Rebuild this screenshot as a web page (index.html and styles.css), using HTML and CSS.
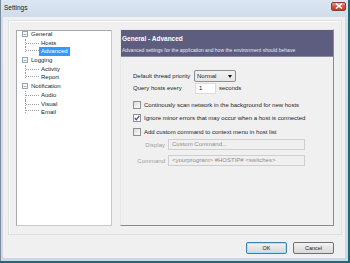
FILE: index.html
```html
<!DOCTYPE html>
<html>
<head>
<meta charset="utf-8">
<link rel="stylesheet" href="styles.css">
</head>
<body>
<div class="screen">
  <div class="window">
    <div class="titlebar">
      <span class="title">Settings</span>
      <span class="close"><svg width="8" height="6" viewBox="0 0 8 6"><path d="M1 0.5 L7 5.5 M7 0.5 L1 5.5" stroke="#fff" stroke-width="1.6"/></svg></span>
    </div>
    <div class="client">
      <div class="group">
        <div class="tree">
          <div class="node"><span class="box">−</span><span class="lbl">General</span></div>
          <div class="child"><span class="conn"></span><span class="lbl">Hosts</span></div>
          <div class="child last"><span class="conn"></span><span class="lbl sel">Advanced</span></div>
          <div class="node"><span class="box">−</span><span class="lbl">Logging</span></div>
          <div class="child"><span class="conn"></span><span class="lbl">Activity</span></div>
          <div class="child last"><span class="conn"></span><span class="lbl">Report</span></div>
          <div class="node"><span class="box">−</span><span class="lbl">Notification</span></div>
          <div class="child"><span class="conn"></span><span class="lbl">Audio</span></div>
          <div class="child"><span class="conn"></span><span class="lbl">Visual</span></div>
          <div class="child last"><span class="conn"></span><span class="lbl">Email</span></div>
        </div>
        <div class="panel">
          <div class="header">
            <div class="h-title">General - Advanced</div>
            <div class="h-sub">Advanced settings for the application and how the environment should behave</div>
          </div>
          <div class="content">
            <div class="row">
              <span class="label">Default thread priority</span>
              <span class="select">Normal<span class="arrow"></span></span>
            </div>
            <div class="row">
              <span class="label">Query hosts every</span>
              <span class="num">1</span>
              <span class="unit">seconds</span>
            </div>
            <div class="check"><span class="cb"></span>Continously scan network in the background for new hosts</div>
            <div class="check"><span class="cb on"><svg width="6" height="6" viewBox="0 0 6 6"><path d="M0.8 3 L2.3 4.8 L5.3 0.8" fill="none" stroke="#2b4c9a" stroke-width="1.2"/></svg></span>Ignore minor errors that may occur when a host is connected</div>
            <div class="check"><span class="cb"></span>Add custom command to context menu in host list</div>
            <div class="field"><span class="flabel">Display</span><span class="finput">Custom Command...</span></div>
            <div class="field"><span class="flabel">Command</span><span class="finput">&lt;yourprogram&gt; #HOSTIP# &lt;switches&gt;</span></div>
          </div>
        </div>
      </div>
      <div class="buttons">
        <span class="btn ok">OK</span>
        <span class="btn">Cancel</span>
      </div>
    </div>
  </div>
</div>
</body>
</html>
```
FILE: styles.css
```css
* { box-sizing: border-box; }
html, body { margin: 0; padding: 0; }
body { font-family: "Liberation Sans", "DejaVu Sans", sans-serif; font-size: 6px; color: #1e1e1e; white-space: nowrap; }
.screen { width: 350px; height: 263px; background: #1d6a73; overflow: hidden; }
.window {
  width: 348px; height: 261px;
  display: flex; flex-direction: column;
  background: linear-gradient(#dce7f3, #cfdcea 17px, #cbd8e6);
  border-left: 1px solid #7d8c9c;
}
.titlebar { height: 17px; display: flex; align-items: center; justify-content: space-between; padding: 0 2px 2px 3px; }
.title { font-size: 6.5px; color: #1a1a1a; }
.close {
  width: 15px; height: 9px; margin-top: -3px;
  display: flex; align-items: center; justify-content: center;
  background: linear-gradient(#e59a8c, #cf5543 50%, #c0392b);
  border: 1px solid #8f3b33; border-radius: 2px;
}
.client { flex: 1; margin: 0 3px 3px 2px; background: #f0f0f0; display: flex; flex-direction: column; }
.group {
  margin: 3px 0 0 5px; width: 334px; height: 215px;
  border: 1px solid #e0e0e0; box-shadow: inset 1px 1px 0 #fafafa;
  display: flex; align-items: flex-start; padding: 9px 0 0 7px; gap: 8px;
}
.tree {
  width: 96px; height: 196px; background: #fff;
  border: 1px solid #a9a9a9; border-right-color: #c9c9c9; border-bottom-color: #c9c9c9;
  padding: 0 0 0 5px;
}
.node, .child { height: 8.7px; display: flex; align-items: center; }
.node:first-child { margin-top: -1px; }
.box {
  width: 6px; height: 6px; border: 1px solid #9aa4b0; background: #f4f6f8;
  font-size: 6px; line-height: 4px; text-align: center; color: #4a5a6a; margin-right: 1px;
}
.child { padding-left: 3px; }
.conn { width: 14px; height: 100%; border-left: 1px dotted #9c9c9c; position: relative; }
.conn::after { content: ""; position: absolute; left: 0; top: 50%; width: 13px; border-top: 1px dotted #9c9c9c; }
.child.last .conn { height: 50%; align-self: flex-start; }
.lbl { padding: 0 2px; line-height: 8.7px; }
.lbl.sel { background: #3399ff; color: #fff; }
.panel {
  width: 214px; height: 197px; margin-top: -1px;
  border: 1px solid #8c8c8c; border-left-color: #e6e6e6; border-top-color: #e6e6e6;
  display: flex; flex-direction: column;
}
.header { height: 27px; background: #5d5d80; color: #fff; padding: 5px 0 0 1px; border-bottom: 1px solid #8a8aa6; }
.h-title { font-weight: bold; font-size: 6.5px; }
.h-sub { font-size: 5px; margin-top: 5px; color: #e8e8f0; }
.content { padding: 13px 0 0 12px; display: flex; flex-direction: column; }
.row { height: 12px; display: flex; align-items: center; }
.label { width: 61px; }
.select {
  width: 42px; height: 12px; border: 1px solid #8e8f8f; border-radius: 2px;
  background: linear-gradient(#f2f2f2, #e5e5e5); display: flex; align-items: center; justify-content: space-between;
  padding: 0 3px 0 2px;
}
.arrow { width: 0; height: 0; border-left: 2.5px solid transparent; border-right: 2.5px solid transparent; border-top: 3px solid #111; }
.num { width: 21px; height: 11px; border: 1px solid #dcdcdc; background: #fff; padding-left: 3px; line-height: 9px; margin-left: 1px; }
.unit { margin-left: 3px; }
.check { height: 13.5px; display: flex; align-items: center; }
.row + .check { margin-top: 4px; }
.cb {
  width: 8px; height: 8px; border: 1px solid #8f8f8f; background: linear-gradient(135deg, #dcdcdc, #fbfbfb);
  margin-right: 3px; display: flex; align-items: center; justify-content: center;
}
.cb.on { background: #fff; }
.field { height: 16px; display: flex; align-items: center; }
.check + .field { margin-top: -2px; }
.flabel { width: 35px; text-align: right; color: #9f9f9f; padding-right: 3px; }
.finput { width: 137px; height: 11px; border: 1px solid #cfcfcf; background: #f0f0f0; color: #8d8d8d; padding-left: 3px; line-height: 9px; }
.buttons { flex: 1; display: flex; justify-content: flex-end; gap: 6px; padding: 7px 11px 0 0; }
.btn {
  width: 41px; height: 12px; border: 1px solid #707070; border-radius: 2px;
  background: linear-gradient(#f4f4f4, #e4e4e4 50%, #d9d9d9);
  display: flex; align-items: center; justify-content: center; font-size: 5.5px;
}
.btn.ok { border-color: #3c7fb1; box-shadow: inset 0 0 0 1px #a9e4fb; }
```
